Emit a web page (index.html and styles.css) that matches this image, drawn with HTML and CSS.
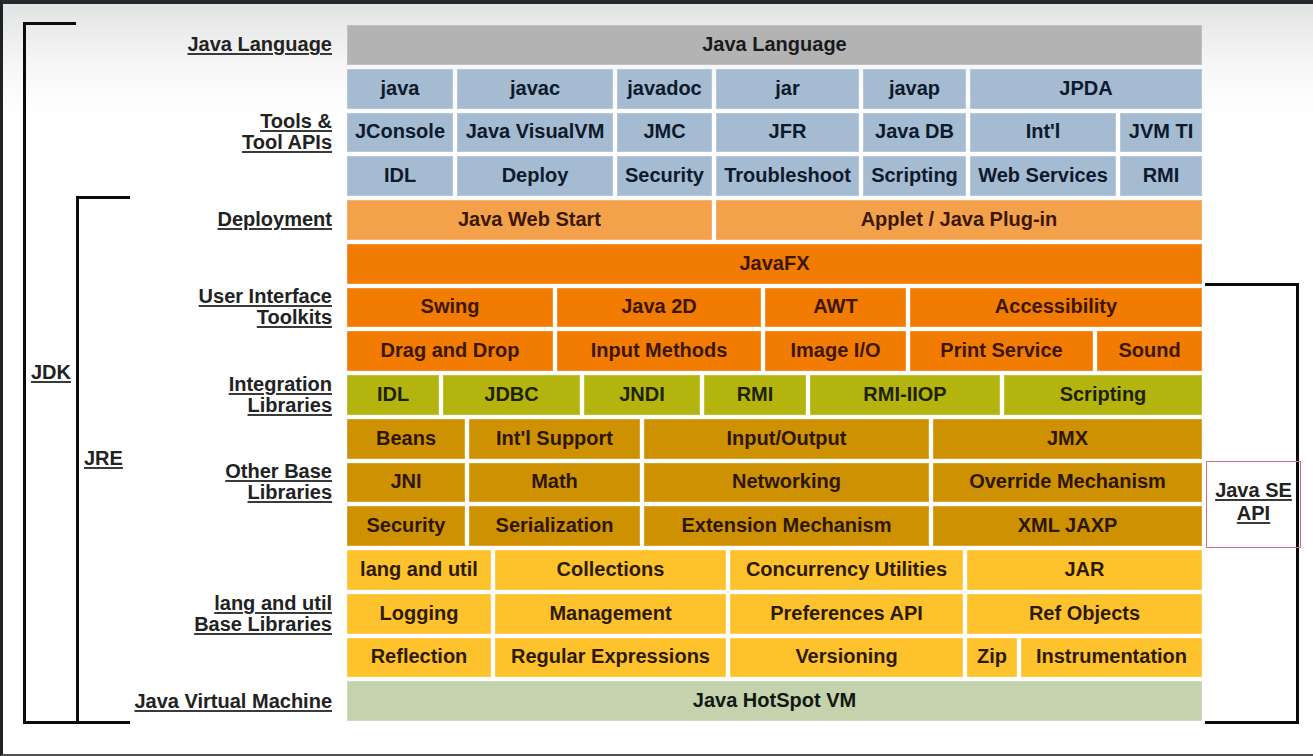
FILE: index.html
```html
<!DOCTYPE html>
<html lang="en">
<head>
<meta charset="utf-8">
<title>Java SE Platform Overview</title>
<link rel="stylesheet" href="styles.css">
</head>
<body>
<div class="page">
  <div class="diagram">
    <div class="bracket jdk"><span class="ulabel">JDK</span></div>
    <div class="bracket jre"><span class="ulabel">JRE</span></div>

    <div class="label g1"><span>Java Language</span></div>
    <div class="label g2"><span>Tools &amp;</span><span>Tool APIs</span></div>
    <div class="label g3"><span>Deployment</span></div>
    <div class="label g4"><span>User Interface</span><span>Toolkits</span></div>
    <div class="label g5"><span>Integration</span><span>Libraries</span></div>
    <div class="label g6"><span>Other Base</span><span>Libraries</span></div>
    <div class="label g7"><span>lang and util</span><span>Base Libraries</span></div>
    <div class="label g8"><span>Java Virtual Machine</span></div>

    <div class="stack">
      <div class="row t-full"><div class="c jl">Java Language</div></div>

      <div class="row t-tools">
        <div class="c tool">java</div><div class="c tool">javac</div><div class="c tool">javadoc</div>
        <div class="c tool">jar</div><div class="c tool">javap</div><div class="c tool s2">JPDA</div>
      </div>
      <div class="row t-tools">
        <div class="c tool">JConsole</div><div class="c tool">Java VisualVM</div><div class="c tool">JMC</div>
        <div class="c tool">JFR</div><div class="c tool">Java DB</div><div class="c tool">Int'l</div><div class="c tool">JVM TI</div>
      </div>
      <div class="row t-tools">
        <div class="c tool">IDL</div><div class="c tool">Deploy</div><div class="c tool">Security</div>
        <div class="c tool">Troubleshoot</div><div class="c tool">Scripting</div><div class="c tool">Web Services</div><div class="c tool">RMI</div>
      </div>

      <div class="row t-tools">
        <div class="c dep s3">Java Web Start</div><div class="c dep s4">Applet / Java Plug-in</div>
      </div>

      <div class="row t-full"><div class="c ui">JavaFX</div></div>
      <div class="row t-ui">
        <div class="c ui">Swing</div><div class="c ui">Java 2D</div><div class="c ui">AWT</div><div class="c ui s2">Accessibility</div>
      </div>
      <div class="row t-ui">
        <div class="c ui">Drag and Drop</div><div class="c ui">Input Methods</div><div class="c ui">Image I/O</div>
        <div class="c ui">Print Service</div><div class="c ui">Sound</div>
      </div>

      <div class="row t-int">
        <div class="c intg">IDL</div><div class="c intg">JDBC</div><div class="c intg">JNDI</div>
        <div class="c intg">RMI</div><div class="c intg">RMI-IIOP</div><div class="c intg">Scripting</div>
      </div>

      <div class="row t-base">
        <div class="c base">Beans</div><div class="c base">Int'l Support</div><div class="c base">Input/Output</div><div class="c base">JMX</div>
      </div>
      <div class="row t-base">
        <div class="c base">JNI</div><div class="c base">Math</div><div class="c base">Networking</div><div class="c base">Override Mechanism</div>
      </div>
      <div class="row t-base">
        <div class="c base">Security</div><div class="c base">Serialization</div><div class="c base">Extension Mechanism</div><div class="c base">XML JAXP</div>
      </div>

      <div class="row t-lang">
        <div class="c util">lang and util</div><div class="c util">Collections</div><div class="c util">Concurrency Utilities</div><div class="c util s2">JAR</div>
      </div>
      <div class="row t-lang">
        <div class="c util">Logging</div><div class="c util">Management</div><div class="c util">Preferences API</div><div class="c util s2">Ref Objects</div>
      </div>
      <div class="row t-lang">
        <div class="c util">Reflection</div><div class="c util">Regular Expressions</div><div class="c util">Versioning</div>
        <div class="c util">Zip</div><div class="c util">Instrumentation</div>
      </div>

      <div class="row t-full"><div class="c vm">Java HotSpot VM</div></div>
    </div>

    <div class="bracket se"></div>
    <div class="sebox"><span>Java SE</span><span>API</span></div>
  </div>
</div>
</body>
</html>
```

FILE: styles.css
```css
html, body {
  margin: 0;
  padding: 0;
}

body {
  font-family: "Liberation Sans", Arial, sans-serif;
  background: #ffffff;
}

.page {
  box-sizing: border-box;
  width: 1313px;
  height: 756px;
  overflow: hidden;
  border-top: 4px solid #24272c;
  border-left: 3px solid #1f2227;
  border-bottom: 2px solid #505050;
  background: linear-gradient(#e2e3e3 0px, #f6f6f6 60px, #ffffff 110px);
  padding-top: 21px;
  padding-left: 20px;
}

.diagram {
  display: grid;
  grid-template-columns: 53px 54px 217px 855px 100px;
  grid-template-rows: repeat(16, 39.75px);
  row-gap: 4px;
}

/* brackets */
.bracket {
  box-sizing: border-box;
  border: 3px solid #0b0b0b;
  border-right: none;
  display: flex;
  align-items: center;
}

.jdk {
  grid-column: 1;
  grid-row: 1 / 17;
  margin-top: -3.5px;
  margin-bottom: -3px;
  padding-left: 5px;
}

.jre {
  grid-column: 2;
  grid-row: 5 / 17;
  margin-top: -4.5px;
  margin-bottom: -3px;
  padding-left: 5px;
  padding-bottom: 3px;
}

.se {
  grid-column: 5;
  grid-row: 7 / 17;
  margin-top: -4.5px;
  margin-bottom: -3px;
  margin-left: 3px;
  width: 94px;
  border-left: none;
  border-right: 3px solid #0b0b0b;
}

.ulabel,
.label span,
.sebox span {
  font-size: 20px;
  font-weight: 700;
  color: #222222;
  text-decoration: underline;
  text-decoration-thickness: 2px;
  text-underline-offset: 2px;
  text-decoration-color: #3a3a3a;
}

/* left labels */
.label {
  grid-column: 3;
  display: flex;
  flex-direction: column;
  justify-content: center;
  align-items: flex-end;
  padding-right: 15px;
  line-height: 21px;
  text-align: right;
}

.g1 { grid-row: 1; }
.g2 { grid-row: 2 / 5; }
.g3 { grid-row: 5; }
.g4 { grid-row: 6 / 9; }
.g5 { grid-row: 9; }
.g6 { grid-row: 10 / 13; }
.g7 { grid-row: 13 / 16; }
.g8 { grid-row: 16; }

/* Java SE API box */
.sebox {
  grid-column: 5;
  grid-row: 11 / 13;
  box-sizing: border-box;
  margin: -1.5px 0 -1.5px 4px;
  width: 95px;
  border: 1.5px solid #c9737f;
  display: flex;
  flex-direction: column;
  justify-content: center;
  align-items: center;
  line-height: 23px;
  padding-bottom: 4px;
}

/* content stack */
.stack {
  grid-column: 4;
  grid-row: 1 / 17;
  display: grid;
  grid-template-rows: repeat(16, 39.75px);
  row-gap: 4px;
}

.row {
  display: grid;
  column-gap: 4px;
}

.t-full { grid-template-columns: 1fr; }
.t-tools { grid-template-columns: 106px 156px 95px 143px 103px 146px 82px; }
.t-ui { grid-template-columns: 206px 204px 141px 183px 105px; }
.t-int { grid-template-columns: 92px 137px 116px 102px 190px 198px; }
.t-base { grid-template-columns: 118px 171px 285px 269px; }
.t-lang { grid-template-columns: 144px 231px 233px 50px 181px; }

.s2 { grid-column: span 2; }
.s3 { grid-column: span 3; }
.s4 { grid-column: span 4; }

.c {
  display: flex;
  align-items: center;
  justify-content: center;
  font-size: 20px;
  font-weight: 700;
  white-space: nowrap;
  padding-bottom: 1px;
  box-shadow: inset 0 0 0 1px rgba(255, 255, 255, 0.18);
}

.jl {
  background: #b3b3b3;
  color: #1a1a1a;
}

.tool {
  background: #a5bbd1;
  color: #0c1a2c;
}

.dep {
  background: #f4a14c;
  color: #3a1805;
}

.ui {
  background: #f27b02;
  color: #3d1600;
}

.intg {
  background: #b3b50e;
  color: #1f2200;
}

.base {
  background: #cd9102;
  color: #2e1700;
}

.util {
  background: #fec22c;
  color: #2d1b00;
}

.vm {
  background: #c5d2ae;
  color: #101810;
}
```
